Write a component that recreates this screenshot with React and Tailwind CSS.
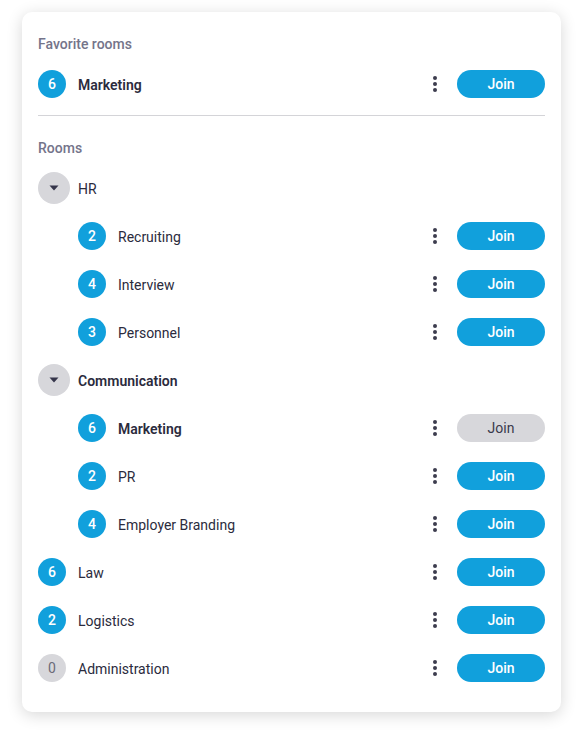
import React from 'react';
import clsx from 'clsx';

const rooms = [
  { type: 'group', name: 'HR', children: [
    { count: 2, name: 'Recruiting' },
    { count: 4, name: 'Interview' },
    { count: 3, name: 'Personnel' },
  ] },
  { type: 'group', name: 'Communication', bold: true, children: [
    { count: 6, name: 'Marketing', bold: true, joined: true },
    { count: 2, name: 'PR' },
    { count: 4, name: 'Employer Branding' },
  ] },
  { count: 6, name: 'Law' },
  { count: 2, name: 'Logistics' },
  { count: 0, name: 'Administration' },
];

const Dots = () => (
  <button className="w-6 h-7 flex flex-col items-center justify-center gap-[2px]">
    <span className="w-[4px] h-[4px] rounded-full bg-[#3d3d4e]" />
    <span className="w-[4px] h-[4px] rounded-full bg-[#3d3d4e]" />
    <span className="w-[4px] h-[4px] rounded-full bg-[#3d3d4e]" />
  </button>
);

const RoomRow = ({ count, name, bold, joined, indent }) => (
  <div className={clsx('flex items-center h-12', indent && 'pl-10')}>
    <div className={clsx(
      'w-7 h-7 rounded-full flex items-center justify-center text-sm',
      count > 0 ? 'bg-[#11a0dc] text-white font-medium' : 'bg-[#d7d7db] text-[#6b6b78]'
    )}>
      {count}
    </div>
    <span className={clsx('ml-3 text-sm leading-5 pt-px text-[#2b2b3d]', bold && 'font-semibold')}>{name}</span>
    <div className="ml-auto flex items-center">
      <Dots />
      <button className={clsx(
        'ml-[10px] w-[88px] h-7 rounded-full text-sm font-medium',
        joined ? 'bg-[#d7d7db] text-[#3a3a4c] font-normal' : 'bg-[#11a0dc] text-white'
      )}>
        Join
      </button>
    </div>
  </div>
);

const GroupRow = ({ name, bold }) => (
  <div className="flex items-center h-12">
    <div className="w-8 h-8 rounded-full bg-[#d7d7db] flex items-center justify-center">
      <svg width="10" height="6" viewBox="0 0 10 6"><path d="M0.5 0.5 L9.5 0.5 L5 5.5 Z" fill="#35354a" /></svg>
    </div>
    <span className={clsx('ml-2 text-sm leading-5 pt-px text-[#2b2b3d]', bold && 'font-semibold')}>{name}</span>
  </div>
);

export default function App() {
  return (
    <div className="min-h-screen bg-white pt-3 pl-[22px] font-['Roboto',sans-serif]">
      <div className="w-[539px] bg-white rounded-[10px] shadow-[0_3px_16px_rgba(0,0,0,0.16)] px-4 pt-6 pb-5">
        <div className="text-sm leading-4 font-medium text-[#74748a]">Favorite rooms</div>
        <div className="mt-2">
          <RoomRow count={6} name="Marketing" bold />
        </div>
        <div className="mt-[7px] border-t border-[#d4d4d8]" />
        <div className="mt-6 text-sm leading-4 font-medium text-[#74748a]">Rooms</div>
        <div className="mt-2">
          {rooms.map((r) =>
            r.type === 'group' ? (
              <div key={r.name}>
                <GroupRow name={r.name} bold={r.bold} />
                {r.children.map((c) => <RoomRow key={c.name} {...c} indent />)}
              </div>
            ) : (
              <RoomRow key={r.name} {...r} />
            )
          )}
        </div>
      </div>
    </div>
  );
}
